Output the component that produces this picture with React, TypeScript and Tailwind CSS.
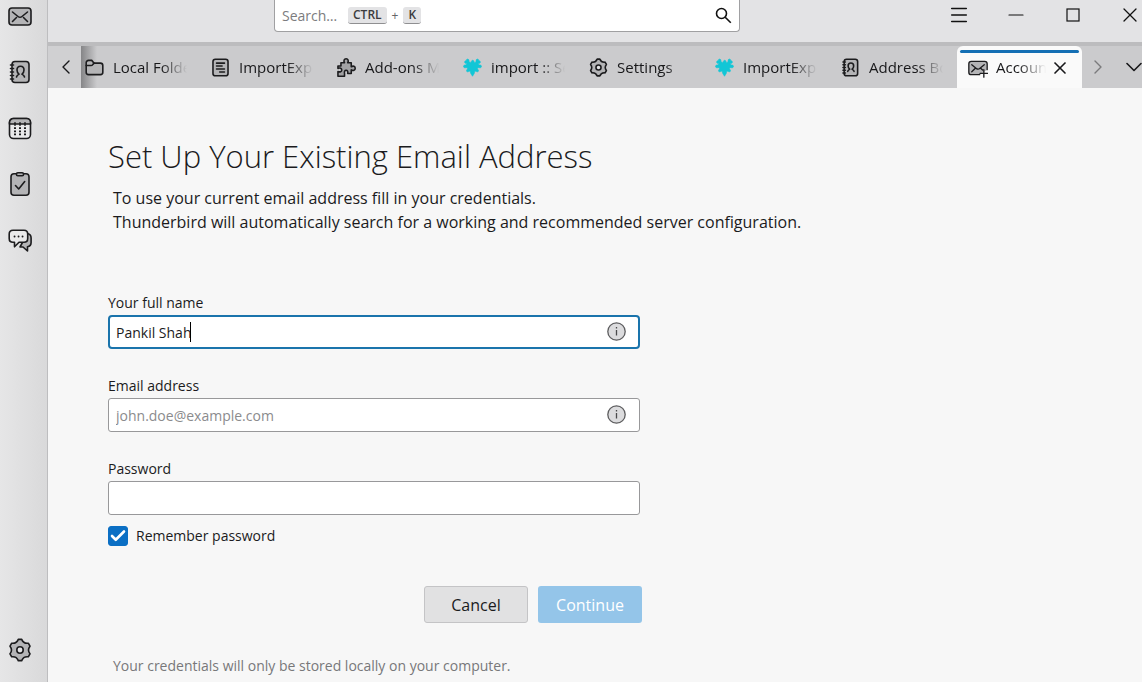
import { useState, type ReactNode } from "react";
import { Check, ChevronDown, ChevronLeft, ChevronRight, Menu, Minus, X } from "lucide-react";

function Icon({ className, children }: { className: string; children: ReactNode }) {
  return (
    <svg
      viewBox="0 0 24 24"
      className={className}
      fill="none"
      stroke="#1c1c1e"
      strokeWidth="1.6"
      strokeLinecap="round"
      strokeLinejoin="round"
      aria-hidden="true"
    >
      {children}
    </svg>
  );
}

const mail = (
  <>
    <rect x="1" y="4" width="22" height="17" rx="3" fill="#b4b4b6" />
    <path d="M4.5 8l5.5 4.5q2 1.6 4 0L19.5 8M4.5 17.5l4-4M19.5 17.5l-4-4" />
  </>
);

const addressBook = (
  <>
    <rect x="4" y="1.5" width="17" height="21" rx="3" fill="#b4b4b6" />
    <path d="M2.5 5h3M2.5 8.5h3M2.5 12h3M2.5 15.5h3M2.5 19h3" />
    <path d="M8.5 17c.3-1.8 1.4-2.2 2.5-2.8C9.5 13 9 11.5 9 10c0-2.5 1.5-3.7 3.5-3.7S16 7.5 16 10c0 1.5-.5 3-2 4.200 1.100.6 2.200 1 2.500 2.800" />
  </>
);

const gear = (
  <>
    <path
      d="M10.3 1.4H13.7Q15.5 5.9 20.3 5.2L22 8.2Q19 12 22 15.8L20.3 18.8Q15.5 18.1 13.7 22.6H10.3Q8.5 18.1 3.7 18.8L2 15.8Q5 12 2 8.2L3.7 5.2Q8.5 5.9 10.3 1.4Z"
      fill="#b4b4b6"
    />
    <circle cx="12" cy="12" r="3.2" fill="#e4e4e6" />
  </>
);

const calendar = (
  <>
    <rect x="1.5" y="2.5" width="21" height="20" rx="4" fill="#e9e9ea" />
    <path d="M1.5 8V6.5a4 4 0 0 1 4-4h13a4 4 0 0 1 4 4V8Z" fill="#b4b4b6" />
    <path d="M7 6.8v2.4M12 6.8v2.4M17 6.8v2.4" />
    <path
      d="M6 12.2h2M11 12.2h2M16 12.2h2M6 15.3h2M11 15.3h2M16 15.3h2M6 18.4h2M11 18.4h2M16 18.4h2"
      strokeLinecap="butt"
      strokeWidth="1.8"
    />
  </>
);

const tasks = (
  <>
    <rect x="3" y="1.8" width="18" height="21.4" rx="3" fill="#b4b4b6" />
    <rect x="8.5" y=".8" width="7" height="3" rx="1.3" fill="#b4b4b6" />
    <path d="m7.5 13.5 3.2 3.5 6-7.5" />
  </>
);

const chat = (
  <>
    <path
      d="M19.5 5.5c2.300.5 3.600 2 3.600 4.500v4.500c0 2.400-1.500 3.900-3.600 4.300V23l-4.500-4h-3l3-5.500Z"
      fill="#b4b4b6"
    />
    <path
      d="M5 2.2h11q3.7 0 3.7 3.8v4.5q0 3.8-3.7 3.8h-5l-4.5 4.500v-4.500H5q-3.800 0-3.800-3.800V6q0-3.800 3.800-3.800Z"
      fill="#e9e9ea"
    />
    <path d="M6.5 8.5h.1M10.5 8.5h.1M14.5 8.5h.1" strokeWidth="1.8" />
  </>
);

const folder = (
  <>
    <path
      d="M1.5 6a3 3 0 0 1 3-3h4l3 3.500h8a3 3 0 0 1 3 3V18a3 3 0 0 1-3 3h-15a3 3 0 0 1-3-3Z"
      fill="#b4b4b6"
    />
    <path d="M1.5 9.5h6q1.500 0 2.500-1.500l1.500-1.500" />
  </>
);

const page = (
  <>
    <rect x="2.5" y="1.5" width="19" height="21" rx="3" fill="#b4b4b6" />
    <path d="M7 6.5h10M7 10.2h7M7 13.9h10M11 17.6h6" />
  </>
);

const puzzle = (
  <path
    d="M5 6h4.500C8 3.500 9 1 11.500 1S15 3.500 13.500 6H18v5c2.500-1.500 5-.5 5 2s-2.500 3.500-5 2v4.500h-4.500c.6-2.600-.4-4-2-4s-2.600 1.400-2 4V23H1.200v-6c2.600 1.200 4.800.3 4.800-1.900s-2.200-3.100-4.800-1.900V10H5Z"
    fill="#a2a2a4"
  />
);

const accountMail = (
  <>
    <path d="M14 20H4a3 3 0 0 1-3-3V7a3 3 0 0 1 3-3h16a3 3 0 0 1 3 3v7" fill="#b4b4b6" />
    <path d="M4.5 8l5.5 4.5q2 1.6 4 0L19.5 8M4.5 16.5l4-4M15.5 12.5l2 2" />
    <path d="M19 14v9M14.5 18.5h9" />
  </>
);

const addon = (
  <path
    d="M8 5.500c1.800.5 2.400-.4 2.700-1.500.5-1.500 2.600-1.500 3 0 .3 1.100 1 2 2.500 1.500.6-1.500 0-2.500.7-3.500 1.200-1.500 3.300-.3 2.900 1.500 1.500-.4 3 1.400 1.700 2.700-.8.8-1.800.4-2.300 1.200.4 1.500 1.400 1.500 2.600 1.500 2 .3 2 3 .2 3.400-1.500.3-3-.8-3.700.6-.4 1.200.8 1.600 1.200 2.600.5 1.600-1.300 2.600-2.600 1.600-.8-.6-1.400-.6-2 0-.6.800-.2 1.500-.6 2.300L12 23l-2.300-3.600c-.5-.8 0-1.500-.6-2.300-.6-.6-1.200-.6-2 0-1.300 1-3.100 0-2.600-1.600.4-1 1.600-1.400 1.200-2.600-.7-1.400-2.200-.3-3.700-.6-1.800-.4-1.800-3.100.2-3.400 1.200 0 2.200 0 2.600-1.500-.5-.8-1.500-.4-2.300-1.200C1.200 4.900 2.700 3.100 4.200 3.500 3.800 1.700 5.900.5 7.100 2c.7 1 .3 2 .9 3.500Z"
    fill="#12c6d6"
    stroke="#12c6d6"
    strokeWidth=".8"
  />
);

const SPACES = [
  { label: "Mail", icon: mail },
  { label: "Address Book", icon: addressBook },
  { label: "Calendar", icon: calendar },
  { label: "Tasks", icon: tasks },
  { label: "Chat", icon: chat },
];

const TABS = [
  { label: "Local Folders", icon: folder },
  { label: "ImportExportTools NG", icon: page },
  { label: "Add-ons Manager", icon: puzzle },
  { label: "import :: Search", icon: addon },
  { label: "Settings", icon: gear },
  { label: "ImportExportTools NG", icon: addon },
  { label: "Address Book", icon: addressBook },
];

function SpacesToolbar() {
  return (
    <nav className="flex w-12 shrink-0 flex-col items-center gap-8 border-r border-[#bdbdbf] bg-linear-to-r from-[#e6e6e7] to-[#d9d9da] pt-1 pr-2 pb-5">
      {SPACES.map((space) => (
        <button key={space.label} type="button" aria-label={space.label}>
          <Icon className="size-6">{space.icon}</Icon>
        </button>
      ))}
      <button type="button" aria-label="Settings" className="mt-auto">
        <Icon className="size-6">{gear}</Icon>
      </button>
    </nav>
  );
}

function TitleBar() {
  return (
    <header className="grid h-[42px] grid-cols-[226px_minmax(0,466px)_1fr] overflow-hidden bg-[#e3e3e5]">
      <label className="col-start-2 flex h-8 items-center rounded-b-[4px] border border-t-0 border-[#a0a0a2] bg-white px-[7px]">
        <input
          type="text"
          aria-label="Search"
          placeholder="Search…"
          className="w-[66px] text-[14px] outline-none placeholder:text-[#7c7c7e]"
        />
        <span className="flex items-center gap-1 text-[12px] leading-4 text-[#3b3b3e]">
          <kbd className="rounded-[3px] border-b border-[#8f8f91] bg-[#e3e3e5] px-[5px] font-[Open_Sans] font-semibold">
            CTRL
          </kbd>
          <span className="px-px text-[#666668]">+</span>
          <kbd className="rounded-[3px] border-b border-[#8f8f91] bg-[#e3e3e5] px-[5px] font-[Open_Sans] font-semibold">
            K
          </kbd>
        </span>
        <svg viewBox="0 0 18 18" className="ml-auto size-[18px]" fill="none" stroke="#111" strokeWidth="1.6" aria-hidden="true">
          <circle cx="7.5" cy="6.5" r="5" />
          <path d="m11.2 10.2 5.600 5.600" />
        </svg>
      </label>
      <div className="-mr-4 flex h-[30px] justify-end text-[#111]">
        <button type="button" aria-label="Menu" className="flex w-[57px] items-center justify-center">
          <Menu className="size-[22px]" strokeWidth={1.6} />
        </button>
        <button type="button" aria-label="Minimize" className="flex w-[57px] items-center justify-center">
          <Minus className="size-6" strokeWidth={1.2} />
        </button>
        <button type="button" aria-label="Maximize" className="flex w-[57px] items-center justify-center">
          <svg viewBox="0 0 14 14" className="size-[14px]" aria-hidden="true">
            <rect x="1" y="1" width="12" height="12" fill="none" stroke="#111" strokeWidth="1.2" />
          </svg>
        </button>
        <button type="button" aria-label="Close" className="flex w-[57px] items-center justify-center">
          <X className="size-6" strokeWidth={1.3} />
        </button>
      </div>
    </header>
  );
}

function TabBar() {
  return (
    <div className="flex h-[46px] overflow-hidden border-t-4 border-[#bcbcbe] bg-[#cbcbcd] text-[15px] text-[#18181a]">
      <button type="button" aria-label="Scroll tabs left" className="flex w-[33px] shrink-0 items-center justify-center bg-[#d0d0d2] pl-[3px]">
        <ChevronLeft className="size-6" strokeWidth={1.4} />
      </button>
      <div role="tablist" className="relative flex min-w-0 flex-1 justify-end overflow-hidden">
        <div className="pointer-events-none absolute inset-y-0 left-0 w-4 bg-linear-to-r from-[#858587] to-transparent" />
        {TABS.map((tab, i) => (
          <button
            key={i}
            type="button"
            role="tab"
            aria-selected="false"
            className="relative flex w-[126px] shrink-0 items-center gap-[9px] pr-[14px] pl-[10px] text-left"
          >
            <Icon className="size-[19px] shrink-0 stroke-2">{tab.icon}</Icon>
            <span className="min-w-0 flex-1 overflow-hidden whitespace-nowrap mask-r-from-[48px] mask-r-to-[74px]">
              {tab.label}
            </span>
          </button>
        ))}
        <div
          role="tab"
          aria-selected="true"
          className="flex w-[125px] shrink-0 flex-col rounded-t-[6px] bg-[#fafafa] px-[3px] pt-1"
        >
          <div className="h-[3px] rounded-full bg-[#146fb4]" />
          <div className="flex flex-1 items-center gap-2 pb-[6px] pl-2">
            <Icon className="size-5 shrink-0">{accountMail}</Icon>
            <span className="w-[50px] overflow-hidden whitespace-nowrap mask-r-from-[22px] mask-r-to-[50px]">
              Account Setup
            </span>
            <button type="button" aria-label="Close tab" className="-ml-1">
              <X className="size-5" strokeWidth={2} />
            </button>
          </div>
        </div>
      </div>
      <button type="button" aria-label="Scroll tabs right" className="flex w-[31px] shrink-0 items-center justify-center text-[#7a7a7c]">
        <ChevronRight className="size-6" strokeWidth={1.4} />
      </button>
      <button type="button" aria-label="List all tabs" className="-mr-3 flex w-[41px] shrink-0 items-center justify-center">
        <ChevronDown className="size-7" strokeWidth={1.4} />
      </button>
    </div>
  );
}

function InfoButton({ label }: { label: string }) {
  return (
    <button
      type="button"
      aria-label={label}
      className="absolute top-[7px] right-[14px] size-[19px] rounded-full"
    >
      <svg viewBox="0 0 19 19" className="size-full" aria-hidden="true">
        <circle cx="9.5" cy="9.5" r="8.7" fill="#dcdcde" stroke="#5c5c5e" strokeWidth="1.3" />
        <path d="M9.5 8v5.500M9.5 5v1.500" stroke="#4a4a4c" strokeWidth="1.3" />
      </svg>
    </button>
  );
}

function AccountSetup() {
  const [name, setName] = useState("Pankil Shah");
  const [remember, setRemember] = useState(true);

  return (
    <main className="flex-1 bg-[#f7f7f7] px-[60px] pt-[47px] text-[#1b1b1d]">
      <h1 className="text-[31px] leading-[42px] font-light">Set Up Your Existing Email Address</h1>
      <p className="mt-[9px] pl-[5px] text-[16px] leading-6">
        To use your current email address fill in your credentials.
        <br />
        Thunderbird will automatically search for a working and recommended server configuration.
      </p>

      <form className="mt-[59px] max-w-[532px] text-[14px]" onSubmit={(e) => e.preventDefault()}>
        <div className="flex flex-col gap-[27px]">
          <div>
            <label htmlFor="name" className="mb-[2px] block leading-5">
              Your full name
            </label>
            <div className="relative">
              <input
                id="name"
                type="text"
                value={name}
                onChange={(e) => setName(e.target.value)}
                className="h-[34px] w-full rounded-[4px] border-2 border-[#1a74ac] bg-white px-[6px] outline-none"
              />
              <span className="pointer-events-none absolute top-[7px] left-[82px] h-5 w-px bg-black" />
              <InfoButton label="About your name" />
            </div>
          </div>
          <div>
            <label htmlFor="email" className="mb-[2px] block leading-5">
              Email address
            </label>
            <div className="relative">
              <input
                id="email"
                type="email"
                placeholder="john.doe@example.com"
                className="h-[34px] w-full rounded-[3px] border border-[#98989a] bg-white px-[7px] outline-none placeholder:text-[#8b8b8d]"
              />
              <InfoButton label="About your email" />
            </div>
          </div>
          <div>
            <label htmlFor="password" className="mb-[2px] block leading-5">
              Password
            </label>
            <input
              id="password"
              type="password"
              className="h-[34px] w-full rounded-[3px] border border-[#98989a] bg-white px-[7px] outline-none"
            />
          </div>
        </div>

        <label className="mt-[11px] flex items-center gap-2 leading-5">
          <span className="grid size-5">
            <input
              type="checkbox"
              checked={remember}
              onChange={(e) => setRemember(e.target.checked)}
              className="peer col-start-1 row-start-1 size-5 appearance-none rounded-[3px] border border-[#98989a] bg-white checked:border-[#0b6fc4] checked:bg-[#0b6fc4]"
            />
            <Check
              className="pointer-events-none invisible col-start-1 row-start-1 size-[18px] place-self-center text-white peer-checked:visible"
              strokeWidth={3.5}
            />
          </span>
          Remember password
        </label>

        <div className="mt-10 -mr-0.5 flex justify-end gap-[10px] text-[16px]">
          <button type="button" className="h-[37px] w-[104px] rounded-[3px] border border-[#c4c4c6] bg-[#e1e1e2]">
            Cancel
          </button>
          <button type="submit" disabled className="h-[37px] w-[104px] rounded-[3px] bg-[#94c5e9] text-white">
            Continue
          </button>
        </div>
      </form>

      <p className="mt-[33px] pl-[5px] text-[14px] leading-5 text-[#78787a]">
        Your credentials will only be stored locally on your computer.
      </p>
    </main>
  );
}

export default function App() {
  return (
    <div className="flex min-h-screen bg-[#f7f7f7] font-['Open_Sans','Noto_Sans',sans-serif]">
      <SpacesToolbar />
      <div className="flex min-w-0 flex-1 flex-col">
        <TitleBar />
        <TabBar />
        <AccountSetup />
      </div>
    </div>
  );
}
